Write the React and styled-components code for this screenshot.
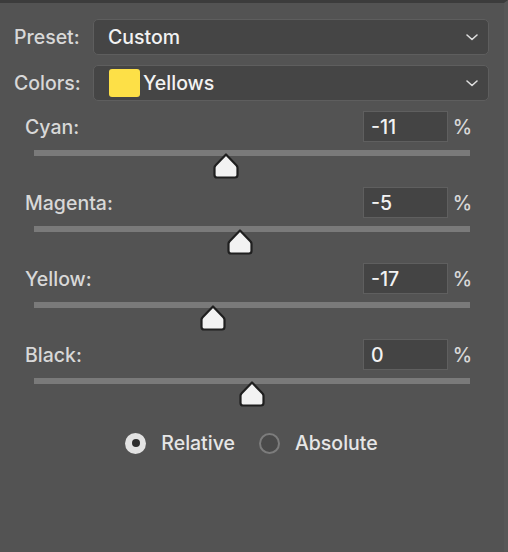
import React from 'react'
import styled, { createGlobalStyle } from 'styled-components';

const GlobalStyle = createGlobalStyle`
  body {
    margin: 0;
    background-color: #535353;
    font-family: "Inter", "Liberation Sans", sans-serif;
  }
`;

const Panel = styled.div`
  width: 508px;
  height: 552px;
  box-sizing: border-box;
  background-color: #535353;
  border-top: 3px solid #3c3c3c;
  border-right: 4px solid #575757;
  padding: 16px 15px 0 14px;
  display: flex;
  flex-direction: column;
  font-size: 19.5px;
  font-weight: 500;
`;

const SelectRow = styled.div`
  display: flex;
  align-items: center;
  margin-bottom: 10px;
`;

const SelectLabel = styled.span`
  width: 79px;
  color: #d8d8d8;
`;

const Dropdown = styled.div`
  flex: 1;
  height: 36px;
  box-sizing: border-box;
  display: flex;
  align-items: center;
  padding: 0 9px 0 14px;
  background-color: #454545;
  border: 1px solid #5e5e5e;
  border-radius: 5px;
  color: #f2f2f2;
`;

const DropdownText = styled.span`
  flex: 1;
`;

const Swatch = styled.span`
  width: 31px;
  height: 28px;
  margin-left: 1px;
  margin-right: 3px;
  border-radius: 3px;
  background-color: #fde047;
`;

const Sliders = styled.div`
  display: flex;
  flex-direction: column;
  padding: 0 17px 0 11px;
`;

const SliderBlock = styled.div`
  display: flex;
  flex-direction: column;
  height: 76px;
`;

const LabelRow = styled.div`
  display: flex;
  align-items: center;
  height: 31px;
`;

const SliderLabel = styled.span`
  flex: 1;
  color: #d8d8d8;
`;

const ValueBox = styled.div`
  width: 85px;
  height: 31px;
  box-sizing: border-box;
  display: flex;
  align-items: center;
  padding-left: 7px;
  background-color: #444444;
  border: 1px solid #5f5f5f;
  color: #f2f2f2;
`;

const Percent = styled.span`
  width: 24px;
  text-align: right;
  color: #d8d8d8;
`;

const Track = styled.div`
  position: relative;
  margin: 8px 2px 0 9px;
  height: 6px;
  background-color: #7a7a7a;
`;

const Thumb = styled.svg`
  position: absolute;
  top: 3px;
  width: 26px;
  height: 26px;
  margin-left: -13px;
`;

const RadioRow = styled.div`
  display: flex;
  align-items: center;
  justify-content: center;
  gap: 24px;
  margin-top: 16px;
`;

const RadioOption = styled.label`
  display: flex;
  align-items: center;
  gap: 15px;
  color: #e6e6e6;
`;

const RadioCircle = styled.span`
  width: 21px;
  height: 21px;
  box-sizing: border-box;
  border-radius: 50%;
  display: flex;
  align-items: center;
  justify-content: center;
  background-color: ${p => (p.$checked ? '#e2e2e2' : '#4a4a4a')};
  border: ${p => (p.$checked ? 'none' : '2px solid #7c7c7c')};
`;

const RadioDot = styled.span`
  width: 8px;
  height: 8px;
  border-radius: 50%;
  background-color: #2e2e2e;
`;

const Chevron = () => (
  <svg width="14" height="10" viewBox="0 0 14 10">
    <path d="M2 3 L7 7.5 L12 3" fill="none" stroke="#dedede" strokeWidth="1.6" strokeLinecap="round" strokeLinejoin="round" />
  </svg>
);

const sliders = [
  { name: 'Cyan', value: -11, pos: 192 },
  { name: 'Magenta', value: -5, pos: 206 },
  { name: 'Yellow', value: -17, pos: 179 },
  { name: 'Black', value: 0, pos: 218 },
];

const App = () => {
  return (
    <Panel>
      <GlobalStyle />
      <SelectRow>
        <SelectLabel>Preset:</SelectLabel>
        <Dropdown>
          <DropdownText>Custom</DropdownText>
          <Chevron />
        </Dropdown>
      </SelectRow>
      <SelectRow>
        <SelectLabel>Colors:</SelectLabel>
        <Dropdown>
          <Swatch />
          <DropdownText>Yellows</DropdownText>
          <Chevron />
        </Dropdown>
      </SelectRow>
      <Sliders>
        {sliders.map(s => (
          <SliderBlock key={s.name}>
            <LabelRow>
              <SliderLabel>{s.name}:</SliderLabel>
              <ValueBox>{s.value}</ValueBox>
              <Percent>%</Percent>
            </LabelRow>
            <Track>
              <Thumb viewBox="0 0 26 26" style={{ left: s.pos }}>
                <path
                  d="M13 1.5 L23.6 12.6 Q24.5 13.5 24.5 14.8 V22 Q24.5 24.5 22 24.5 H4 Q1.5 24.5 1.5 22 V14.8 Q1.5 13.5 2.4 12.6 Z"
                  fill="#f2f2f2"
                  stroke="#1f1f1f"
                  strokeWidth="2.2"
                  strokeLinejoin="round"
                />
              </Thumb>
            </Track>
          </SliderBlock>
        ))}
      </Sliders>
      <RadioRow>
        <RadioOption>
          <RadioCircle $checked><RadioDot /></RadioCircle>
          Relative
        </RadioOption>
        <RadioOption>
          <RadioCircle />
          Absolute
        </RadioOption>
      </RadioRow>
    </Panel>
  )
}

export default App
